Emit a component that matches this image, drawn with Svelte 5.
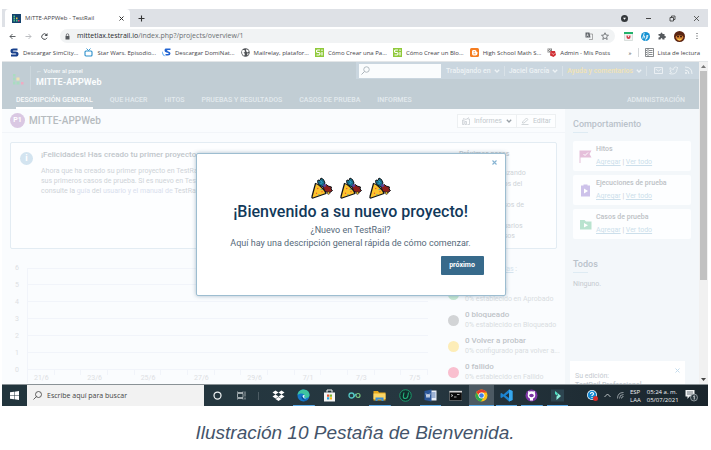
<script>
  const bookmarks = [
    { icon: 's', text: 'Descargar SimCity...' },
    { icon: 'tv', text: 'Star Wars. Episodio...' },
    { icon: 'js', text: 'Descargar DomiNat...' },
    { icon: 'globe', text: 'Mailrelay, platafor...' },
    { icon: 'si', text: 'Cómo Crear una Pa...' },
    { icon: 'si', text: 'Cómo Crear un Blo...' },
    { icon: 'blogger', text: 'High School Math S...' },
    { icon: 'posts', text: 'Admin - Mis Posts' }
  ];
  const tabs = ['DESCRIPCIÓN GENERAL', 'QUE HACER', 'HITOS', 'PRUEBAS Y RESULTADOS', 'CASOS DE PRUEBA', 'INFORMES'];
  const cards = [
    { icon: 'flag', title: 'Hitos' },
    { icon: 'clip', title: 'Ejecuciones de prueba' },
    { icon: 'folder', title: 'Casos de prueba' }
  ];
  const legend = [
    { color: '#c5e8d2', title: '0 Aprobado', sub: '0% establecido en Aprobado' },
    { color: '#d2d4d6', title: '0 bloqueado', sub: '0% establecido en Bloqueado' },
    { color: '#fdedb8', title: '0 Volver a probar', sub: '0% configurado para volver a...' },
    { color: '#f9bfcf', title: '0 fallido', sub: '0% establecido en Fallido' }
  ];
  const yAxis = [6, 5, 4, 3, 2, 1, 0];
  const xAxis = ['21/6', '', '23/6', '', '25/6', '', '27/6', '', '29/6', '', '7/1', '', '7/3', '', '7/5'];
  const apps = ['dropbox', 'edge', 'store', 'infinity', 'explorer', 'u', 'word', 'cmd', 'chrome', 'vscode', 'github', 'filmora'];
  const running = ['edge', 'explorer', 'word', 'chrome', 'vscode', 'github', 'filmora'];
  let open = $state(true);
</script>

{#snippet chevron()}
  <svg class="chev" viewBox="0 0 6 4"><path d="M.8.8 3 3 5.2.8" fill="none" stroke="currentColor" stroke-width="1.3" /></svg>
{/snippet}

{#snippet bookmarkIcon(name)}
  <svg class="i9" viewBox="0 0 18 18">
    {#if name === 's'}
      <path d="M15 3H7Q3 3 3 6q0 3 4 3h4q4 0 4 3t-4 3H2" fill="none" stroke="#17408c" stroke-width="4.2" />
    {:else if name === 'tv'}
      <rect x="2" y="6" width="14" height="10" rx="2" fill="#fff" stroke="#2b8fcb" stroke-width="2.2" /><path d="M5 1l4 4 4-4" fill="none" stroke="#2b8fcb" stroke-width="1.8" />
    {:else if name === 'js'}
      <path d="M7 1h10v3h-5q-2 0-2 1t3 2q4 1 4 4 0 4-5 4H7v-3h5q2 0 1-2l-4-1Q5 8 5 5q0-3 2-4z" fill="#2264d1" /><path d="M1 6q1 8 6 11-6-1-7-7z" fill="#67aef3" />
    {:else if name === 'globe'}
      <circle cx="9" cy="9" r="8.4" fill="#505357" /><path d="M3 4q5-1 5 2t-3 3l3 3-2 4Q1 12 2 7zM11 2l5 4-3 3-3-3zM12 11l4 0-3 4z" fill="#fff" />
    {:else if name === 'si'}
      <rect width="18" height="18" fill="#8fc93a" /><path d="M10 4H5q-2 0-2 2.500t2 2.500h3q2 0 2 2.500t-2 2.500H3M14 8v7M14 3v3" fill="none" stroke="#fff" stroke-width="2.300" />
    {:else if name === 'blogger'}
      <rect width="18" height="18" rx="3" fill="#f57d20" /><path d="M6 4h4q3 0 3 3 0 1 2 1v3q0 4-4 4H7q-3 0-3-4V7q0-3 2-3z" fill="#fff" /><path d="M7 7.500h3M7 11.500h4" stroke="#f57d20" stroke-width="1.600" />
    {:else}
      <path d="M1 1h9v8H1z" fill="#888" /><path d="M2 2l6 6M8 2L2 8" stroke="#fff" /><path d="M7 6h9l2 8-5 4-7-3z" fill="#d12f35" /><path d="M9 10l4 3 2-3" stroke="#fff" fill="none" />
    {/if}
  </svg>
{/snippet}

{#snippet appIcon(name)}
  <svg class="app" viewBox="0 0 26 26">
    {#if name === 'dropbox'}
      <path d="M7 3l6 4-6 4-6-4zM19 3l6 4-6 4-6-4zM7 11l6 4-6 4-6-4zM19 11l6 4-6 4-6-4zM7 20l6-4 6 4-6 4z" fill="#fff" />
    {:else if name === 'edge'}
      <circle cx="13" cy="13" r="12" fill="#1477c9" /><path d="M1 12C2 4 8 1 13 1c8 0 12 6 12 11 0 4-3 6-7 6-3 0-4-1-3-3 1-5-4-7-8-6-3 1-5 2-6 3z" fill="#3ec4a0" /><path d="M9 14c-1 6 4 9 9 9l4-2c-5 2-10 0-10-6z" fill="#0b4d96" /><path d="M11 15q0-4 4-3 1 2-1 4 1 3 5 2-5 3-8-3z" fill="#e6f6ff" />
    {:else if name === 'store'}
      <path d="M2 7h22v18H2z" fill="#f5f5f5" /><path d="M8 7V2h10v5" fill="none" stroke="#f5f5f5" stroke-width="2" /><path d="M8 11h4.500v4.500H8z" fill="#e3512b" /><path d="M13.500 11H18v4.500h-4.500z" fill="#7cb82f" /><path d="M8 16.500h4.500V21H8z" fill="#25a3e0" /><path d="M13.500 16.500H18V21h-4.500z" fill="#f8b91d" />
    {:else if name === 'infinity'}
      <circle cx="7" cy="13" r="5" fill="none" stroke="#54c6c2" stroke-width="2.600" /><circle cx="20" cy="13" r="4" fill="none" stroke="#7bc67f" stroke-width="2.400" /><path d="M11 16l5-6" stroke="#54c6c2" stroke-width="2.400" />
    {:else if name === 'explorer'}
      <path d="M1 4h9l2 3h13v16H1z" fill="#e8a91c" /><path d="M1 9h24v11H1z" fill="#fbd667" /><path d="M5 17h16v7h-4v-3H9v3H5z" fill="#3b8fd6" />
    {:else if name === 'u'}
      <circle cx="13" cy="13" r="11.500" fill="#102b2b" stroke="#1c9b6c" stroke-width="2" /><path d="M10 7L8.500 15q0 4 4 4t5-4L19 7" fill="none" stroke="#24b37c" stroke-width="2.200" />
    {:else if name === 'word'}
      <path d="M12 3h13v20H12z" fill="#e8eef8" /><path d="M15 8h8M15 12h8M15 16h8" stroke="#2b579a" stroke-width="1.600" /><path d="M1 4l14-3v24L1 22z" fill="#2b579a" /><path d="M4 9l2 8 2-7 2 7 2-8" fill="none" stroke="#fff" stroke-width="1.500" />
    {:else if name === 'cmd'}
      <path d="M1 4h25v19H1z" fill="#0a0a0a" stroke="#999" /><path d="M1 4h25v3H1z" fill="#d5d5d5" /><path d="M4 11l4 2-4 2M10 16h5M16 11h5" stroke="#ddd" stroke-width="1.500" fill="none" />
    {:else if name === 'chrome'}
      <circle cx="13" cy="13" r="12" fill="#fbc116" /><path d="M2.600 7A12 12 0 0 1 23.400 7H13a6 6 0 0 0-5.600 4z" fill="#e33b2e" /><path d="M2.600 7A12 12 0 0 0 12 25l5-8.500A6 6 0 0 1 7.600 15z" fill="#2da94f" /><circle cx="13" cy="13" r="6" fill="#fff" /><circle cx="13" cy="13" r="4.600" fill="#3f7fe8" />
    {:else if name === 'vscode'}
      <path d="M18 1l7 3v18l-7 3L7 15l-4 3-2-1V9l2-1 4 3z" fill="#1c83cf" /><path d="M18 8v10l-7-5z" fill="#22313a" /><path d="M18 1l7 3v18l-7 3z" fill="#37a7ee" />
    {:else if name === 'github'}
      <circle cx="13" cy="13" r="12" fill="#7d35a5" /><circle cx="13" cy="12" r="7.500" fill="#fff" /><path d="M6 4l5 2-4 5zM20 4l-5 2 4 5zM10 17h6v6h-6z" fill="#fff" /><ellipse cx="13" cy="13" rx="4.500" ry="3.500" fill="#7d35a5" />
    {:else}
      <path d="M0 1h26v24H0z" fill="#2d4550" /><path d="M8 4l5 4v6l-5-4z" fill="#4ee0c2" /><path d="M13 8l7 6-9 8v-7l3-2z" fill="#8df0dc" />
    {/if}
  </svg>
{/snippet}

<figure>
  <div class="desktop">
    <header class="strip">
      <div class="tab">
        <svg class="i9" viewBox="0 0 18 18"><path d="M0 0h18v18H0z" fill="#14426d" /><path d="M3 3h3v3H3zM3 7h3v3H3zM3 11h3v4H3zM8 11h3v4H8z" fill="#4fc38a" /><path d="M8 7h3v3H8z" fill="#f0c04a" /><path d="M12 12h3v3h-3z" fill="#e2476f" /></svg>
        <span class="grow">MiTTE-APPWeb - TestRail</span>
        <button aria-label="Cerrar pestaña"><svg class="i5" viewBox="0 0 10 10"><path d="M1 1l8 8M9 1L1 9" stroke="#333" stroke-width="2" /></svg></button>
      </div>
      <button class="plus" aria-label="Nueva pestaña"><svg class="i7" viewBox="0 0 14 14"><path d="M7 1v12M1 7h12" stroke="#333" stroke-width="2.200" /></svg></button>
      <div class="win">
        <svg class="i7" viewBox="0 0 14 14"><circle cx="7" cy="7" r="7" fill="#33373b" /><path d="M4 5.500h6L7 9.500z" fill="#fff" /></svg>
        <button aria-label="Minimizar"><svg class="i7" viewBox="0 0 14 14"><path d="M2 7h10" stroke="#333" stroke-width="1.800" /></svg></button>
        <button aria-label="Restaurar"><svg class="i7" viewBox="0 0 14 14"><path d="M2 5h7v7H2zM5 5V2h7v7H9" fill="none" stroke="#333" stroke-width="1.600" /></svg></button>
        <button aria-label="Cerrar"><svg class="i7" viewBox="0 0 14 14"><path d="M2 2l10 10M12 2L2 12" stroke="#333" stroke-width="1.500" /></svg></button>
      </div>
    </header>

    <div class="toolbar">
      <button aria-label="Atrás"><svg class="i7" viewBox="0 0 14 14"><path d="M13 7H2M7 2L2 7l5 5" fill="none" stroke="#4b4f53" stroke-width="1.800" /></svg></button>
      <button aria-label="Adelante"><svg class="i7" viewBox="0 0 14 14"><path d="M1 7h11M7 2l5 5-5 5" fill="none" stroke="#b5b8bb" stroke-width="1.800" /></svg></button>
      <button aria-label="Recargar"><svg class="i7" viewBox="0 0 14 14"><path d="M12 9.500A5.500 5.500 0 1 1 11 3.500" fill="none" stroke="#4b4f53" stroke-width="2" /><path d="M13 0v6H7z" fill="#4b4f53" /></svg></button>
      <div class="omni">
        <svg class="i7" viewBox="0 0 14 14"><path d="M3 6h8v7H3z" fill="#55595d" /><path d="M4.500 6V4a2.500 2.500 0 0 1 5 0v2" fill="none" stroke="#55595d" stroke-width="1.500" /></svg>
        <span class="url"><b>mittetlax.testrail.io</b>/index.php?/projects/overview/1</span>
        <svg class="i8" viewBox="0 0 16 16"><path d="M1 1h8l2 10H1z" fill="#5f6368" /><path d="M3 6h4M5 3v3l-2 3M5 6l2 3" stroke="#fff" fill="none" /><path d="M10 4h5v11H8" fill="none" stroke="#777" stroke-width="1.200" /></svg>
        <svg class="i8" viewBox="0 0 16 16"><path d="M8 1.500l2 4.500 5 .5-3.800 3.200L12.400 15 8 12l-4.400 3 1.200-5.300L1 6.500 6 6z" fill="none" stroke="#55595d" stroke-width="1.500" /></svg>
      </div>
      <div class="ext">
        <svg class="i9" viewBox="0 0 18 18"><path d="M1 1h16v16H1z" fill="#f2f4f3" stroke="#b9c4c0" /><path d="M0 0h18v4H0z" fill="#24b26b" /><path d="M5 7h8v3q0 4-4 4t-4-4z" fill="#d13b4a" /><path d="M7 7h4l-2 4z" fill="#fff" /></svg>
        <svg class="i9" viewBox="0 0 18 18"><circle cx="9" cy="9" r="9" fill="#1592d3" /><path d="M6.500 2L3 13M4.500 8h3L6 13M12 7l-3 10M11 7h3l-2 6h-2" fill="none" stroke="#fff" stroke-width="1.600" /></svg>
        <svg class="i8" viewBox="0 0 16 16"><path d="M1 4h4q0-3 2-3t2 3h4v4q3 0 3 2t-3 2v3H9q0-3-2-3t-2 3H1v-4q3 0 3-2T1 7z" fill="#55595d" /></svg>
        <svg class="i11" viewBox="0 0 22 22"><circle cx="11" cy="11" r="11" fill="#5a2412" /><path d="M3 12q3-5 8-3 5-2 8 3-2 7-8 8-6-1-8-8z" fill="#d88335" /><circle cx="8" cy="11" r="2" fill="#35150c" /><circle cx="14" cy="11" r="2" fill="#35150c" /><path d="M7 16q4 3 8 0" stroke="#f6db4e" stroke-width="2" fill="none" /></svg>
        <svg class="i8" viewBox="0 0 16 16"><path d="M7 2h2v2H7zM7 7h2v2H7zM7 12h2v2H7z" fill="#44484c" /></svg>
      </div>
    </div>

    <nav class="marks">
      {#each bookmarks as b}
        <a href="#marcador">{@render bookmarkIcon(b.icon)}<span>{b.text}</span></a>
      {/each}
      <span class="more">»</span>
      <a class="reading" href="#lista"><svg class="i9" viewBox="0 0 18 18"><path d="M1 1h16v16H1zM6 1v16M8 5h7M8 9h7M8 13h7M2 5h2M2 9h2M2 13h2" fill="none" stroke="#55595d" stroke-width="1.400" /></svg><span>Lista de lectura</span></a>
    </nav>

    <div class="view">
      <div class="page">
        <header class="head">
          <div class="headrow">
            <div class="brand">
              <svg class="logo" viewBox="0 0 24 26"><path d="M2 2h5v5H2zM2 9h5v6H2zM2 17h5v6H2zM9 17h6v6H9z" fill="#a9dcc0" /><path d="M9 9h6v6H9z" fill="#eee2b0" /><path d="M18 18h5v5h-5z" fill="#efabc2" /></svg>
              <div class="names"><a href="#panel">← Volver al panel</a><strong>MITTE-APPWeb</strong></div>
            </div>
            <div class="util">
              <label class="find">
                <svg class="i9" viewBox="0 0 18 18"><circle cx="11" cy="7" r="5.500" fill="none" stroke="#aab3ba" stroke-width="1.800" /><path d="M7 11l-6 6" stroke="#aab3ba" stroke-width="2" /></svg>
                <input aria-label="Buscar" />
              </label>
              <button>Trabajando en {@render chevron()}</button>
              <button>Jaciel García {@render chevron()}</button>
              <button class="help">Ayuda y comentarios {@render chevron()}</button>
              <span class="social">
                <svg class="i9" viewBox="0 0 18 18"><path d="M1 3h16v12H1zM3 6l6 4 6-4" fill="none" stroke="currentColor" stroke-width="1.800" /></svg>
                <svg class="i9" viewBox="0 0 18 18"><path d="M2 3q3 4 7 4 0-5 4-5 2 0 3 1h2l-2 3q0 10-10 10-3 0-5-1 3 0 4-2-3-1-3-3h2Q1 7 2 3z" fill="none" stroke="currentColor" stroke-width="1.600" /></svg>
                <svg class="i9" viewBox="0 0 18 18"><circle cx="4" cy="14" r="2" fill="currentColor" /><path d="M2 8q8 0 8 8M2 2q14 0 14 14" fill="none" stroke="currentColor" stroke-width="2" /></svg>
              </span>
            </div>
          </div>
          <nav class="tabs">
            {#each tabs as t, i}<a href="#seccion" class:active={i === 0}>{t}</a>{/each}
            <a class="admin" href="#admin">ADMINISTRACIÓN</a>
          </nav>
        </header>

        <div class="columns">
          <main>
            <div class="title">
              <span class="badge">P1</span>
              <h1>MITTE-APPWeb</h1>
              <div class="actions">
                <button><svg class="i8" viewBox="0 0 16 16"><path d="M1 6h3v9H1zM6 9h3v6H6zM11 4h4v11h-4M2 3q6 5 12-2" fill="none" stroke="currentColor" stroke-width="1.400" /></svg>Informes {@render chevron()}</button>
                <button><svg class="i8" viewBox="0 0 16 16"><path d="M3 10l8-8 3 3-8 7H3zM1 15h14" fill="none" stroke="currentColor" stroke-width="1.500" /></svg>Editar</button>
              </div>
            </div>

            <section class="welcome">
              <span class="info">i</span>
              <div class="congrats">
                <h2>¡Felicidades! Has creado tu primer proyecto</h2>
                <p>Ahora que ha creado su primer proyecto en TestRail, agregue<br />sus primeros casos de prueba. Si es nuevo en TestRail,<br />consulte la <a href="#guia">guía</a> del <a href="#manual">usuario y el manual de</a> TestRail.</p>
              </div>
              <div class="steps">
                <h2>Próximos pasos</h2>
                <p>Mire: comenzando</p>
                <p>Agregue hitos del<br />proyecto</p>
                <p>Agregue casos de<br />prueba</p>
                <p>Agregue usuarios<br />y sus permisos</p>
              </div>
            </section>

            <section class="stats">
              <div class="chart">
                <div class="rows">
                  {#each yAxis as n}<div class="row"><span>{n}</span><i></i></div>{/each}
                </div>
                <div class="series"></div>
                <div class="ticks">{#each xAxis as x}<span>{x}</span>{/each}</div>
              </div>
              <div class="legend">
                <p class="range"><a href="#dias">14 días</a> :</p>
                {#each legend as l}
                  <div class="entry"><i style="background:{l.color}"></i><div><strong>{l.title}</strong><span>{l.sub}</span></div></div>
                {/each}
              </div>
            </section>
          </main>

          <aside>
            <h3>Comportamiento</h3>
            {#each cards as c}
              <div class="card">
                <svg class="cardicon" viewBox="0 0 26 26">
                  {#if c.icon === 'flag'}
                    <path d="M1 1h24l-4 7 4 7H3v11H1z" fill="#e5bfda" /><path d="M9 8l3 3 6-6" fill="none" stroke="#fff" stroke-width="2" />
                  {:else if c.icon === 'clip'}
                    <path d="M4 3h5V1h8v2h5v22H4z" fill="#cdc2ea" /><path d="M10 9v10l8-5z" fill="#fff" />
                  {:else}
                    <path d="M2 4h9l3 3h11v16H2z" fill="#b9e3cf" /><path d="M10 10v9l8-4.500z" fill="#fff" />
                  {/if}
                </svg>
                <div><strong>{c.title}</strong><span><a href="#agregar">Agregar</a> | <a href="#todo">Ver todo</a></span></div>
              </div>
            {/each}
            <h3 class="todos">Todos</h3>
            <p>Ninguno.</p>
            <div class="toast">
              <div>Su edición:<strong>TestRail Professional</strong></div>
              <button aria-label="Cerrar aviso"><svg class="i5" viewBox="0 0 10 10"><path d="M1 1l8 8M9 1L1 9" stroke="#c3dbec" stroke-width="2" /></svg></button>
            </div>
          </aside>
        </div>

        {#if open}
          <div class="overlay">
            <div class="modal" role="dialog" aria-label="Bienvenida">
              <button class="close" aria-label="Cerrar" onclick={() => (open = false)}><svg class="i5" viewBox="0 0 10 10"><path d="M1 1l8 8M9 1L1 9" stroke="#86b3d2" stroke-width="2.200" /></svg></button>
              <div class="party">
                {#each [1, 2, 3] as n}
                  <svg viewBox="0 0 44 44">
                    <path d="M14 6l4 1 2-5 5 3 3 7-4 8-9-5-2-6z" fill="#16708c" stroke="#101418" stroke-width="2" />
                    <path d="M19 7l3 4-3 3" stroke="#3fb4d6" stroke-width="2" fill="none" />
                    <path d="M24 19l7-4 3 3 7 2-1 4 3 3-5 4-5 0-6-3z" fill="#8d1f1c" stroke="#101418" stroke-width="2" />
                    <circle cx="27" cy="17" r="3" fill="#5a429b" /><path d="M32 31l4-2 2 4-4 2z" fill="#f1c232" stroke="#101418" />
                    <path d="M9 13C15 14 28 26 30 33L4 42q-3 0-2-3z" fill="#fdc42d" stroke="#101418" stroke-width="2.500" stroke-linejoin="round" />
                    <path d="M13 22l1 2M10 33l2-1M21 30l2-1" stroke="#df4a31" stroke-width="2.500" /><path d="M20 24l1 2M15 35h2" stroke="#3aa6c8" stroke-width="2.500" />
                  </svg>
                {/each}
              </div>
              <h2>¡Bienvenido a su nuevo proyecto!</h2>
              <p>¿Nuevo en TestRail?</p>
              <p>Aquí hay una descripción general rápida de cómo comenzar.</p>
              <button class="next">próximo</button>
            </div>
          </div>
        {/if}
      </div>
      <div class="scroll">
        <svg viewBox="0 0 9 9"><path d="M2 6l2.500-3L7 6z" fill="#777" /></svg>
        <i></i>
        <svg viewBox="0 0 9 9"><path d="M2 3l2.500 3L7 3z" fill="#444" /></svg>
      </div>
    </div>

    <footer class="taskbar">
      <button class="start" aria-label="Inicio"><svg class="i9" viewBox="0 0 18 18"><path d="M0 2.500L8 1.500V8.500H0zM9 1.300L18 0v8.500H9zM0 9.500h8v7l-8-1zM9 9.500h9V18l-9-1.300z" fill="#fff" /></svg></button>
      <label class="search">
        <svg class="i9" viewBox="0 0 18 18"><circle cx="11" cy="7" r="6" fill="none" stroke="#333" stroke-width="1.500" /><path d="M7 11l-6 6" stroke="#333" stroke-width="1.500" /></svg>
        <input aria-label="Buscar en Windows" placeholder="Escribe aquí para buscar" />
      </label>
      <div class="sys">
        <svg class="i9" viewBox="0 0 18 18"><circle cx="9" cy="9" r="7" fill="none" stroke="#eef1f2" stroke-width="2.500" /></svg>
        <svg class="i9" viewBox="0 0 18 18"><path d="M1 5h11v8H1zM1 1v2h11V1M1 17v-2h11v2M16 1v10M16 13v4" fill="none" stroke="#c9d0d3" stroke-width="1.500" /></svg>
        <i></i>
      </div>
      <div class="apps">
        {#each apps as a}<button aria-label={a} class:running={running.includes(a)} class:current={a === 'chrome'}>{@render appIcon(a)}</button>{/each}
      </div>
      <div class="tray">
        <svg class="i11" viewBox="0 0 22 22"><circle cx="10" cy="10" r="10" fill="#eef6fc" /><circle cx="10" cy="10" r="8.500" fill="#1587cf" /><path d="M7 8q0-3 3-3t3 2.500q0 2-3 3.500v1M10 14v2" fill="none" stroke="#fff" stroke-width="2.200" /><circle cx="17" cy="17" r="5" fill="#d92b2b" /></svg>
        <svg class="i7" viewBox="0 0 14 14"><path d="M1 10l6-6 6 6" fill="none" stroke="#dfe4e6" stroke-width="1.600" /></svg>
        <svg class="i7" viewBox="0 0 14 14"><path d="M1 13Q1 1 13 1M5 13q0-8 8-8M9 13q0-4 4-4" fill="none" stroke="#b9c1c5" stroke-width="1.500" /></svg>
        <span>ESP<br />LAA</span>
        <span>05:24 a. m.<br />05/07/2021</span>
        <svg class="note" viewBox="0 0 26 26"><path d="M1 2h18v13H9l-4 5v-5H1z" fill="#f1f3f4" /><path d="M4 6h12M4 10h12" stroke="#45525a" stroke-width="1.500" /><circle cx="18" cy="17" r="7" fill="#2c3a42" stroke="#aab2b6" stroke-width="1.500" /><path d="M16.500 15l2-1.500V21" stroke="#fff" stroke-width="1.500" fill="none" /></svg>
      </div>
    </footer>
  </div>
  <figcaption>Ilustración 10 Pestaña de Bienvenida.</figcaption>
</figure>

<style>
  :global(body) { background: #fff; }
  * { box-sizing: border-box; }
  figure { margin: 0; height: 100vh; min-height: 400px; padding: 9px 3px 6px 2px; display: flex; flex-direction: column; }
  .desktop { flex: 1; min-height: 0; display: flex; flex-direction: column; font: 6px/8px "Open Sans", "Noto Sans", sans-serif; color: #3f4347; }
  figcaption { height: 38px; padding-top: 16px; text-align: center; font: italic 19px/22px "Liberation Sans", Arial, sans-serif; color: #44546a; }
  svg { display: block; flex: none; }
  .i5 { width: 5px; height: 5px; }
  .i7 { width: 7px; height: 7px; }
  .i8 { width: 8px; height: 8px; }
  .i9 { width: 9px; height: 9px; }
  .i11 { width: 11px; height: 11px; }
  .chev { width: 6px; height: 4px; }
  button { border: 0; background: none; padding: 0; margin: 0; font: inherit; color: inherit; display: flex; align-items: center; }
  input { border: 0; outline: 0; background: none; padding: 0; min-width: 0; font: inherit; color: inherit; }
  a { color: inherit; text-decoration: none; }
  p, h1, h2, h3 { margin: 0; }
  span, a, button { white-space: nowrap; }

  .strip { flex: none; height: 18px; background: #dee1e6; display: flex; align-items: center; padding: 0 8px 0 3px; }
  .tab { width: 125px; height: 18px; background: #fff; border-radius: 4px 4px 0 0; display: flex; align-items: center; gap: 4px; padding: 0 6px 0 7px; }
  .grow { flex: 1; }
  .plus { margin-left: 8px; }
  .win { margin-left: auto; display: flex; align-items: center; gap: 17px; }
  .toolbar { flex: none; height: 17px; background: #fff; display: flex; align-items: center; gap: 9px; padding: 0 7px; border-top: 1px solid #fff; }
  .omni { flex: 1; height: 14px; margin-left: 3px; border-radius: 7px; background: #f1f3f4; display: flex; align-items: center; gap: 8px; padding: 0 6px 0 4px; font-size: 7px; }
  .url { flex: 1; margin-left: -2px; color: #6a6e72; }
  .url b { font-weight: 400; color: #26292c; }
  .ext { display: flex; align-items: center; gap: 8px; }
  .marks { flex: none; height: 18px; background: #fff; display: flex; align-items: center; gap: 6px; padding: 0 8px; border-bottom: 1px solid #e3e6e8; }
  .marks a { display: flex; align-items: center; gap: 4px; }
  .more { margin-left: auto; }
  .marks .reading { border-left: 1px solid #d5d8da; padding-left: 6px; }

  .view { flex: 1; min-height: 0; display: flex; }
  .page { position: relative; flex: 1; min-width: 0; display: flex; flex-direction: column; overflow: hidden; font: 7px/10px Roboto, "Open Sans", sans-serif; color: #ced3d8; }
  .head { flex: none; background: #c1cdd4; color: #edf2f5; display: flex; flex-direction: column; }
  .headrow { display: flex; align-items: flex-start; justify-content: space-between; height: 31px; }
  .brand { display: flex; gap: 6px; padding: 4px 0 0 10px; }
  .logo { width: 12px; height: 13px; margin-top: 7px; }
  .names { border-left: 1px solid #ccd7dd; padding-left: 5px; display: flex; flex-direction: column; font-size: 6px; font-weight: 500; line-height: 9px; color: #f6f9fa; }
  .names strong { font-size: 9px; line-height: 15px; color: #fafcfd; }
  .util { height: 17px; background: #cad6df; display: flex; align-items: center; padding: 0 6px 0 3px; font-weight: 500; }
  .find { width: 82px; height: 14px; background: #fafcfd; display: flex; align-items: center; padding-left: 2px; margin-right: 1px; }
  .find input { flex: 1; }
  .util button { gap: 3px; padding: 0 4px; border-right: 1px solid #d8e1e7; }
  .util .help { color: #f1e3b4; }
  .util .help .chev, .social { color: #edf2f5; }
  .social { display: flex; gap: 6px; padding-left: 7px; }
  .tabs { display: flex; gap: 17px; padding: 0 14px; }
  .tabs a { height: 16px; line-height: 14px; border-bottom: 2px solid transparent; font-weight: 500; color: #e3eaee; }
  .tabs .active { border-color: #fff; color: #f8fafb; }
  .tabs .admin { margin-left: auto; }

  .columns { flex: 1; min-height: 0; display: flex; }
  main { flex: 1; min-width: 0; background: #fafcfe; }
  .title { height: 24px; border-bottom: 1px solid #f2f5f9; display: flex; align-items: center; gap: 4px; padding: 0 9px 0 8px; }
  .badge { width: 15px; height: 15px; border-radius: 8px; background: #dac8e3; color: #fff; text-align: center; line-height: 15px; font-weight: 700; }
  h1 { flex: 1; font-size: 10px; font-weight: 500; line-height: 14px; color: #b6bbbf; }
  .actions { display: flex; border: 1px solid #edf0f2; background: #fdfeff; }
  .actions button { height: 12px; padding: 0 4px; gap: 4px; font-size: 7px; color: #c3c9ce; }
  .actions .chev { color: #98a0a6; }
  .actions button + button { border-left: 1px solid #edf0f2; }
  .welcome { margin: 9px 8px 0 8px; height: 107px; border: 1px solid #e3ecf3; border-radius: 2px; background: #fdfeff; display: flex; padding: 7px 0 0 9px; overflow: hidden; }
  .info { width: 13px; height: 13px; margin-top: 2px; border-radius: 7px; background: #d3e4f0; color: #fff; font-weight: 700; font-size: 9px; line-height: 13px; text-align: center; }
  .congrats { flex: 1; padding-left: 8px; min-width: 0; }
  h2 { font-size: 8px; line-height: 10px; font-weight: 500; color: #c0c6cb; white-space: nowrap; }
  .congrats p { margin-top: 6px; }
  .congrats a { color: #d9e0ee; }
  .steps { width: 97px; }
  .steps h2 { font-size: 7px; line-height: 8px; }
  .steps p { white-space: nowrap; margin-bottom: 1px; }
  .steps p { padding-left: 9px; }
  .steps h2 + p { margin-top: 10px; }
  .stats { display: flex; padding: 14px 6px 0 8px; gap: 20px; }
  .chart { flex: 1; min-width: 0; color: #dde0e3; }
  .row { display: flex; align-items: center; gap: 8px; height: 17px; }
  .row:first-child { height: 13px; align-items: flex-start; }
  .row span { width: 9px; text-align: right; line-height: 10px; }
  .row i { flex: 1; height: 1px; background: #f1f4fa; }
  .row:first-child i { margin-top: 5px; }
  .rows { background: linear-gradient(#f1f4fa, #f1f4fa) 17px 5px / 1px 100% no-repeat; }
  .series { height: 1px; margin: -9px 13px 0 30px; background: linear-gradient(90deg, #dcefd9 4px, #f8d3d9 4px); }
  .ticks { display: flex; margin-left: 17px; border-left: 1px solid #f1f4fa; }
  .ticks span { flex: 1 1 0; width: 0; display: flex; justify-content: center; line-height: 10px; padding-top: 3px; background: linear-gradient(#f1f4fa, #f1f4fa) right top / 1px 5px no-repeat; }
  .legend { width: 111px; }
  .range { padding-right: 42px; margin-bottom: 6px; text-align: right; line-height: 12px; }
  .range a { text-decoration: underline; color: #d5e4ef; }
  .entry { display: flex; align-items: center; gap: 6px; height: 26px; }
  .entry i { width: 11px; height: 11px; border-radius: 6px; flex: none; }
  .entry strong, .entry span { display: block; line-height: 10px; }
  .entry strong { font-size: 8px; font-weight: 500; color: #bfc4c9; }
  .entry span { color: #d9dde1; }

  aside { position: relative; flex: 0 0 134px; background: #f3f7fa; padding: 9px 8px 0; color: #c5cacf; }
  h3 { font-size: 9px; line-height: 13px; font-weight: 500; color: #b9c2ca; margin-bottom: 8px; padding-bottom: 2px; background: linear-gradient(#deebf3, #deebf3) left bottom / 15px 1px no-repeat; }
  .todos { margin-top: 19px; margin-bottom: 6px; }
  .card { height: 30px; margin-bottom: 4px; background: #fdfeff; border-radius: 2px; display: flex; align-items: center; gap: 4px; padding: 0 6px; }
  .cardicon { width: 13px; height: 13px; }
  .card strong, .card span { display: block; line-height: 13px; }
  .card strong { font-weight: 500; color: #bcc1c5; }
  .card a { text-decoration: underline; color: #ccdfeb; }
  .toast { position: absolute; left: 5px; right: 14px; bottom: -8px; height: 31px; background: #fff; display: flex; justify-content: space-between; align-items: flex-start; padding: 7px 5px; }
  .toast strong { display: block; font-weight: 500; }
  .toast div { padding-top: 4px; line-height: 9px; }

  .overlay { position: absolute; inset: 0; padding-top: 2px; display: flex; align-items: center; justify-content: center; }
  .modal { position: relative; width: 310px; padding: 23px 21px 20px; background: #fff; border: 1px solid #9dbdd0; border-radius: 2px; box-shadow: 0 0 4px rgb(70 110 140 / 45%); display: flex; flex-direction: column; align-items: center; color: #56697a; font-size: 9px; line-height: 13px; }
  .close { position: absolute; top: 6px; right: 8px; }
  .party { display: flex; gap: 7px; }
  .party svg { width: 22px; height: 22px; }
  .modal h2 { font-size: 16px; line-height: 22px; color: #12395a; margin: 2px 0 1px; }
  .modal .next { align-self: flex-end; margin-top: 6px; width: 43px; height: 19px; justify-content: center; border-radius: 1px; background: #376a8b; color: #fff; font-size: 7px; font-weight: 700; }

  .scroll { width: 9px; background: #f1f1f1; display: flex; flex-direction: column; }
  .scroll svg { width: 9px; height: 9px; }
  .scroll i { flex: 0 0 65%; margin: 0 1px; background: #c1c1c1; }
  .scroll svg:last-child { margin-top: auto; }

  .taskbar { flex: none; height: 22px; border-top: 1px solid #8a9296; background: linear-gradient(90deg, #22353d, #263740 60%, #1a252c); display: flex; color: #f2f4f5; }
  .start { width: 25px; justify-content: center; }
  .search { width: 177px; background: #f2f2f2; display: flex; align-items: center; gap: 5px; padding-left: 6px; color: #444; font-size: 7px; }
  .search input { flex: 1; }
  .search input::placeholder { color: #444; opacity: 1; }
  .sys { width: 62px; display: flex; align-items: center; gap: 15px; padding-left: 9px; }
  .sys i { width: 1px; height: 8px; background: #4d5c64; margin-left: -3px; }
  .apps { flex: 1; display: flex; }
  .apps button { flex: 1; justify-content: center; }
  .apps .running { background: linear-gradient(#5aa9e6, #5aa9e6) center bottom / 84% 1px no-repeat; }
  .apps .current { background: linear-gradient(#5aa9e6, #5aa9e6) center bottom / 100% 1px no-repeat, #4c5a63; }
  .app { width: 13px; height: 13px; }
  .tray { width: 138px; display: flex; align-items: center; gap: 6px; padding: 0 10px 0 17px; }
  .tray .note { width: 13px; height: 13px; margin-left: auto; }
</style>
